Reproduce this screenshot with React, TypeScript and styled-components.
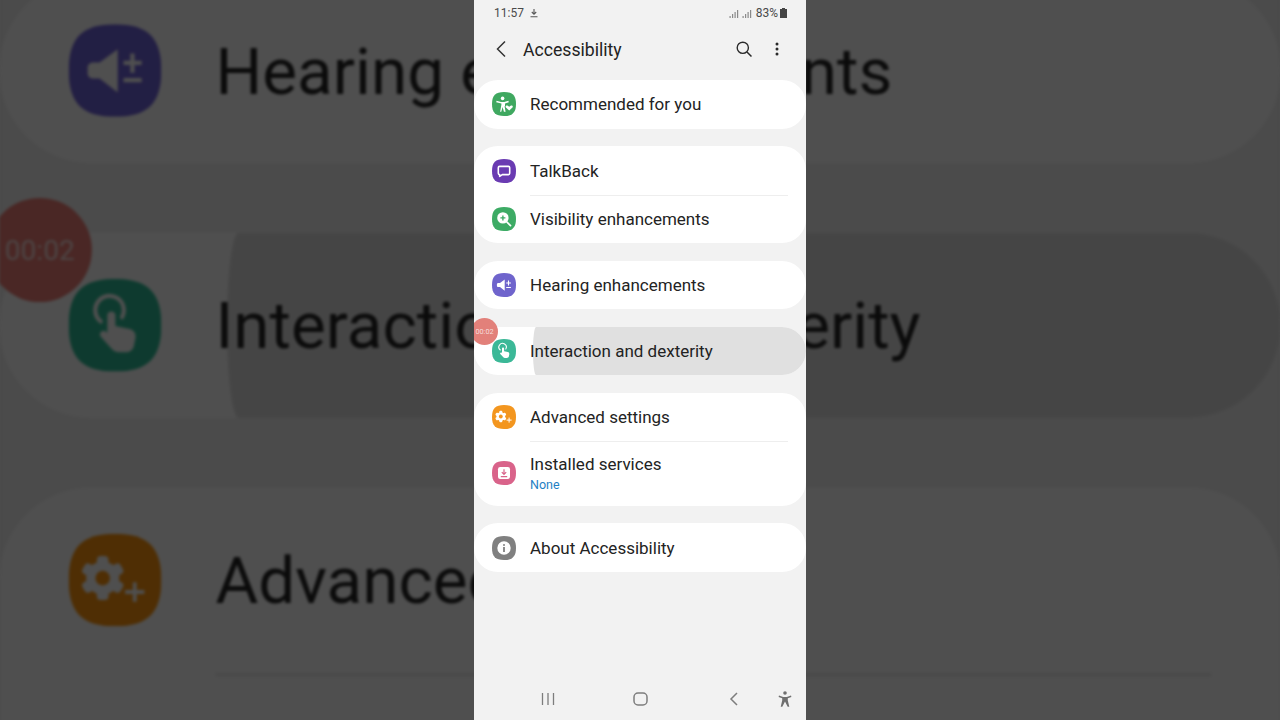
import type { ReactNode } from 'react';
import styled, { createGlobalStyle } from 'styled-components';

const GlobalStyle = createGlobalStyle`
    html, body {
        margin: 0;
        padding: 0;
        width: 1280px;
        height: 720px;
        overflow: hidden;
        background: #4b4b4b;
    }
    * {
        box-sizing: border-box;
    }
`;

type RowItem = {
    label: string;
    sub?: string;
    color: string;
    glyph: ReactNode;
    ripple?: boolean;
};

const Tile = ({ color, children }: { color: string; children: ReactNode }) => (
    <TileSvg viewBox="0 0 24 24">
        <path d="M12 0C20.500 0 24 3.500 24 12S20.500 24 12 24 0 20.500 0 12 3.500 0 12 0Z" fill={color} />
        {children}
    </TileSvg>
);

const recommended = (
    <>
        <circle cx="10.600" cy="6.400" r="1.800" fill="#fff" />
        <path d="M4.600 8.800 9 10h3.200l4.200-1.200.4 1.400-3.800 1.200v2.400l-.4.600 1 5.300h-1.700l-1.300-4.700-1.300 4.700H8.100l1.300-6.900V11.400L4.200 10.200Z" fill="#fff" />
        <path d="M17.200 18.600l-3.300-3.200c-1-1.200.7-2.700 1.900-1.600l1.400 1 1.400-1c1.200-1.100 2.900.4 1.900 1.600Z" fill="#fff" />
    </>
);

const talkBack = (
    <path
        d="M7.600 7.400h8.800c.8 0 1.300.5 1.300 1.300v5.600c0 .8-.5 1.300-1.300 1.300h-6.100L7.700 17.400c-.1-.5-.1-1-.1-1.800-.8 0-1.300-.5-1.300-1.300V8.700c0-.8.5-1.300 1.300-1.300Z"
        fill="none"
        stroke="#fff"
        strokeWidth="1.600"
        strokeLinejoin="round"
    />
);

const visibility = (
    <>
        <circle cx="10.900" cy="10.900" r="5.700" fill="#fff" />
        <path d="M15 15.200l3.500 3.500" stroke="#fff" strokeWidth="1.700" strokeLinecap="round" />
        <path d="M10.900 8.400v5M8.400 10.900h5" stroke="#3dab65" strokeWidth="1.400" />
    </>
);

const hearing = (
    <>
        <path d="M6.300 9.900H8L12.700 6.500V17.700L8 14.100H6.300C5.500 14.100 4.900 13.500 4.900 12.800V11.200C4.900 10.500 5.500 9.900 6.300 9.900Z" fill="#fff" />
        <path d="M14.200 10h4.700M16.500 7.600v5M14.200 14.500h4.700" stroke="#fff" strokeWidth="1.100" />
    </>
);

const interaction = (
    <>
        <path d="M8.300 11A3.700 3.700 0 1 1 13.800 9.900" fill="none" stroke="#fff" strokeWidth="1.100" strokeLinecap="round" />
        <path
            d="M10 9.400C10 8.100 12.100 8.100 12.100 9.400V12.200L15.800 13C16.900 13.300 17.500 14.200 17.300 15.300L16.900 17.300C16.700 18.400 15.800 19 14.800 19H13C12.200 19 11.600 18.700 11.100 18.100L8.300 15C7.600 14.100 8.700 13 9.600 13.600L10 14Z"
            fill="#fff"
        />
    </>
);

const advanced = (
    <>
        {[0, 60, 120, 180, 240, 300].map((deg) => (
            <rect
                key={deg}
                x="7.300"
                y="5.800"
                width="3"
                height="3"
                rx="1"
                fill="#fff"
                transform={`rotate(${deg} 8.800 11.500)`}
            />
        ))}
        <circle cx="8.800" cy="11.500" r="4.300" fill="#fff" />
        <circle cx="8.800" cy="11.500" r="1.900" fill="#f3961f" />
        <path d="M14.600 15.100h5M17.100 12.600v5" stroke="#fff" strokeWidth="1" />
    </>
);

const installed = (
    <>
        <rect x="6" y="6" width="12" height="12" rx="2.200" fill="#fff" />
        <path d="M12 8.300v4.800M9.800 11.100l2.200 2.200 2.200-2.200M8.800 15.600h6.400" fill="none" stroke="#d9638a" strokeWidth="1.200" />
    </>
);

const about = (
    <>
        <circle cx="12" cy="12" r="6.700" fill="#fff" />
        <circle cx="12" cy="8.900" r="1" fill="#808080" />
        <path d="M12 11v5" stroke="#808080" strokeWidth="1.800" />
    </>
);

const GROUPS: RowItem[][] = [
    [{ label: 'Recommended for you', color: '#3fa860', glyph: recommended }],
    [
        { label: 'TalkBack', color: '#6a3bb2', glyph: talkBack },
        { label: 'Visibility enhancements', color: '#3dab65', glyph: visibility },
    ],
    [{ label: 'Hearing enhancements', color: '#6f64cc', glyph: hearing }],
    [{ label: 'Interaction and dexterity', color: '#3bb897', glyph: interaction, ripple: true }],
    [
        { label: 'Advanced settings', color: '#f3961f', glyph: advanced },
        { label: 'Installed services', sub: 'None', color: '#d9638a', glyph: installed },
    ],
    [{ label: 'About Accessibility', color: '#808080', glyph: about }],
];

const Screen = () => (
    <Phone>
        <StatusBar>
            <StatusGroup>
                <span>11:57</span>
                <DownloadIcon width="10" height="10" viewBox="0 0 10 10">
                    <path d="M5 1v5M2.800 4 5 6.300 7.200 4M1.500 8.800h7" fill="none" stroke="#555" strokeWidth="1.100" />
                </DownloadIcon>
            </StatusGroup>
            <StatusGroup>
                <svg width="23" height="9" viewBox="0 0 23 9">
                    <path d="M.5 7h1.200v2H.5ZM3 5h1.200v4H3ZM5.500 3h1.200v6H5.500ZM8 1h1.200v8H8ZM13.500 7h1.200v2h-1.200ZM16 5h1.200v4H16ZM18.500 3h1.200v6h-1.200ZM21 1h1.200v8H21Z" fill="#8a8a8a" />
                </svg>
                <BatteryText>83%</BatteryText>
                <svg width="7" height="10" viewBox="0 0 7 10">
                    <path d="M2 0h3v1h2v9H0V1h2Z" fill="#444" />
                </svg>
            </StatusGroup>
        </StatusBar>
        <Header>
            <svg width="12" height="18" viewBox="0 0 12 18">
                <path d="M10 1.500 2.500 9l7.500 7.500" fill="none" stroke="#333" strokeWidth="1.500" />
            </svg>
            <Title>Accessibility</Title>
            <HeaderActions>
                <svg width="18" height="18" viewBox="0 0 18 18">
                    <circle cx="7.800" cy="7.800" r="5.600" fill="none" stroke="#2a2a2a" strokeWidth="1.400" />
                    <path d="m12 12 4.500 4.500" stroke="#2a2a2a" strokeWidth="1.500" />
                </svg>
                <svg width="4" height="14" viewBox="0 0 4 14">
                    <circle cx="2" cy="2" r="1.500" fill="#2a2a2a" />
                    <circle cx="2" cy="7" r="1.500" fill="#2a2a2a" />
                    <circle cx="2" cy="12" r="1.500" fill="#2a2a2a" />
                </svg>
            </HeaderActions>
        </Header>
        <List>
            {GROUPS.map((group) => (
                <Card key={group[0].label}>
                    {group.map((row, idx) => (
                        <Row key={row.label} $tall={!!row.sub} $divided={idx > 0}>
                            {row.ripple && <Ripple />}
                            <Tile color={row.color}>{row.glyph}</Tile>
                            <RowText>
                                <RowLabel>{row.label}</RowLabel>
                                {row.sub && <RowSub>{row.sub}</RowSub>}
                            </RowText>
                        </Row>
                    ))}
                </Card>
            ))}
        </List>
        <NavBar>
            <svg width="14" height="14" viewBox="0 0 14 14">
                <path d="M1.500 1v12M7 1v12M12.500 1v12" stroke="#7d7d7d" strokeWidth="1.300" />
            </svg>
            <svg width="15" height="14" viewBox="0 0 15 14">
                <rect x="1" y="1" width="13" height="12" rx="4" fill="none" stroke="#7d7d7d" strokeWidth="1.500" />
            </svg>
            <svg width="10" height="14" viewBox="0 0 10 14">
                <path d="M8 1 2 7l6 6" fill="none" stroke="#7d7d7d" strokeWidth="1.500" />
            </svg>
            <svg width="14" height="16" viewBox="0 0 14 16">
                <circle cx="7" cy="2" r="1.800" fill="#6f6f6f" />
                <path d="M1 4.600 5.200 6h3.600L13 4.600l.4 1.300-3.600 1.300v2.200l1.500 6.300H9.700L7 10.400l-2.700 5.300H2.700l1.500-6.300V7.200L.6 5.900Z" fill="#6f6f6f" />
            </svg>
        </NavBar>
        <Timer>00:02</Timer>
    </Phone>
);

const App = () => (
    <Stage>
        <GlobalStyle />
        <Backdrop aria-hidden="true">
            <Screen />
        </Backdrop>
        <Screen />
    </Stage>
);

export default App;

const Stage = styled.div`
    position: relative;
    width: 1280px;
    height: 720px;
    display: flex;
    justify-content: center;
    overflow: hidden;
    font-family: Roboto, 'Liberation Sans', sans-serif;
`;

const Backdrop = styled.div`
    position: absolute;
    inset: 0;
    display: flex;
    justify-content: center;
    transform: scale(3.86);
    transform-origin: center;
    filter: blur(0.45px) saturate(1.15) brightness(0.31);
`;

const Phone = styled.div`
    position: relative;
    z-index: 1;
    width: 332px;
    height: 720px;
    flex: none;
    display: flex;
    flex-direction: column;
    overflow: hidden;
    background: #f2f2f2;
    color: #232323;
`;

const StatusBar = styled.div`
    height: 26px;
    flex: none;
    display: flex;
    align-items: center;
    justify-content: space-between;
    padding: 0 19px 0 20px;
    font-size: 12px;
    color: #4a4a4a;
`;

const StatusGroup = styled.div`
    display: flex;
    align-items: center;
    gap: 2px;
`;

const DownloadIcon = styled.svg`
    margin-left: 3px;
`;

const BatteryText = styled.span`
    margin-left: 2px;
`;

const Header = styled.div`
    height: 46px;
    flex: none;
    display: flex;
    align-items: center;
    padding: 0 27px 0 21px;
`;

const Title = styled.div`
    margin-left: 16px;
    padding-top: 1px;
    font-size: 17.650px;
`;

const HeaderActions = styled.div`
    margin-left: auto;
    display: flex;
    align-items: center;
    gap: 22px;
`;

const List = styled.div`
    flex: 1;
    display: flex;
    flex-direction: column;
    gap: 17.900px;
    padding-top: 8.400px;
`;

const Card = styled.div`
    border-radius: 24px;
    background: #fff;
    overflow: hidden;
`;

const Row = styled.div<{ $tall: boolean; $divided: boolean }>`
    position: relative;
    height: ${({ $tall }) => ($tall ? '64.500px' : '48.200px')};
    display: flex;
    align-items: center;
    gap: 14px;
    padding-left: 18px;
    &::before {
        content: '';
        display: ${({ $divided }) => ($divided ? 'block' : 'none')};
        position: absolute;
        top: 0;
        left: 56px;
        right: 18px;
        height: 1px;
        background: #eeeeee;
    }
`;

const Ripple = styled.span`
    position: absolute;
    top: 0;
    bottom: 0;
    left: 59px;
    right: 0;
    border-radius: 3px 0 0 3px / 50% 0 0 50%;
    background: #e0e0e0;
`;

const TileSvg = styled.svg`
    position: relative;
    width: 24px;
    height: 24px;
    flex: none;
`;

const RowText = styled.div`
    position: relative;
    display: flex;
    flex-direction: column;
`;

const RowLabel = styled.div`
    font-size: 17px;
    line-height: 22px;
`;

const RowSub = styled.div`
    margin-top: 1px;
    font-size: 12.500px;
    line-height: 17px;
    color: #1f7fc4;
`;

const NavBar = styled.div`
    height: 42px;
    flex: none;
    display: grid;
    grid-template-columns: 93px 93px 93px 10px;
    justify-items: center;
    align-items: center;
    padding-left: 27px;
`;

const Timer = styled.div`
    position: absolute;
    top: 318px;
    left: -3px;
    width: 27px;
    height: 27px;
    display: flex;
    align-items: center;
    justify-content: center;
    border-radius: 50%;
    background: #e2807a;
    font-size: 7.300px;
    color: #f6dedc;
`;
